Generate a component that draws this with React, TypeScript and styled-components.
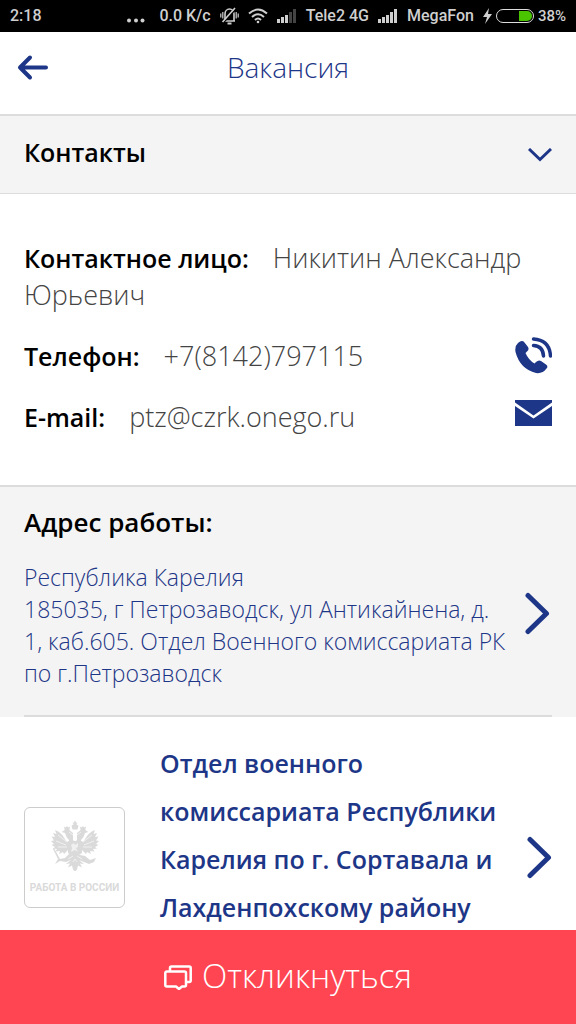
import React from 'react';
import styled, { createGlobalStyle } from 'styled-components';

const NAVY = '#1d3687';
const LINE = '#dcdcdc';
const PANEL = '#f4f4f4';
const UI_FONT = '"Open Sans", "Noto Sans", sans-serif';

const GlobalStyle = createGlobalStyle`
  *, *::before, *::after { box-sizing: border-box; }
  body { margin: 0; background: #fff; font-family: ${UI_FONT}; }
  h1, h2, h3, p, dl, dt, dd { margin: 0; }
  button { font: inherit; border: 0; padding: 0; background: none; cursor: pointer; }
  a { color: inherit; text-decoration: none; }
  svg { display: block; flex: none; }
`;

const Screen = styled.div`
  display: flex;
  flex-direction: column;
  height: 100vh;
  overflow: hidden;
`;

const StatusBar = styled.div`
  flex: none;
  display: flex;
  align-items: center;
  height: 32px;
  padding: 0 10px;
  background: #000;
  color: #cfcfcf;
  font: 500 16px/32px Roboto, sans-serif;
  white-space: nowrap;
`;

const StatusItems = styled.div`
  display: flex;
  align-items: center;
  gap: 9px;
  margin-left: auto;
`;

const Battery = styled.span`
  display: flex;
  align-items: center;
  gap: 4px;
`;

const BatteryLevel = styled.span`
  font-size: 15px;
`;

const Header = styled.header`
  flex: none;
  display: grid;
  grid-template-columns: 48px 1fr 48px;
  align-items: center;
  height: 84px;
  padding: 0 16px 12px;
  border-bottom: 2px solid ${LINE};
`;

const Title = styled.h1`
  color: ${NAVY};
  font-size: 28px;
  font-weight: 300;
  line-height: 40px;
  text-align: center;
`;

const Content = styled.main`
  flex: 1;
  min-height: 0;
  overflow-y: auto;
  scrollbar-width: none;
`;

const SectionToggle = styled.button`
  display: flex;
  align-items: center;
  justify-content: space-between;
  width: 100%;
  height: 78px;
  padding: 0 24px;
  background: ${PANEL};
  border-bottom: 1px solid ${LINE};
  color: #000;
  font-size: 25px;
  font-weight: 600;
  line-height: 36px;
`;

const ToggleText = styled.span`
  padding-bottom: 5px;
`;

const ContactList = styled.dl`
  display: flex;
  flex-direction: column;
  gap: 24px;
  padding: 45px 24px 50px;
  border-bottom: 2px solid ${LINE};
`;

const ContactRow = styled.div`
  display: flex;
  align-items: center;
  justify-content: space-between;
  font-size: 27px;
  line-height: 37px;
`;

const Label = styled.dt`
  display: inline;
  margin-right: 24px;
  color: #000;
  font-size: 25px;
  font-weight: 600;
  line-height: 24px;
`;

const Value = styled.dd`
  display: inline;
  color: #444;
  font-weight: 300;
`;

const MailLink = styled.a`
  padding-bottom: 8px;
`;

const Address = styled.section`
  padding: 16px 24px 0;
  background: ${PANEL};
`;

const AddressTitle = styled.h2`
  color: #000;
  font-size: 26px;
  font-weight: 600;
  line-height: 38px;
`;

const AddressLink = styled.a`
  display: flex;
  align-items: center;
  justify-content: space-between;
  padding: 20px 2px 26px 0;
  border-bottom: 2px solid ${LINE};
  color: ${NAVY};
  font-size: 23px;
  font-weight: 300;
  line-height: 32px;
  white-space: nowrap;
`;

const RaisedIcon = styled.span`
  padding-bottom: 24px;
`;

const Employer = styled.a`
  display: grid;
  grid-template-columns: 136px 1fr 25px;
  align-items: center;
  padding: 22px 24px 0;
  color: ${NAVY};
`;

const EmployerName = styled.h3`
  padding-bottom: 44px;
  font-size: 25px;
  font-weight: 600;
  line-height: 48px;
  white-space: nowrap;
`;

const Logo = styled.span`
  display: flex;
  flex-direction: column;
  align-items: center;
  gap: 7px;
  width: 101px;
  height: 101px;
  padding-top: 13px;
  border: 1px solid #ccc;
  border-radius: 6px;
  color: #dadada;
`;

const LogoText = styled.span`
  font: 700 10px/20px Roboto, sans-serif;
  white-space: nowrap;
`;

const ReplyButton = styled.button`
  && {
    flex: none;
    display: flex;
    align-items: center;
    justify-content: center;
    gap: 10px;
    height: 94px;
    padding-bottom: 3px;
    background: #ff4552;
    color: #fff;
    font-size: 33px;
    font-weight: 300;
    line-height: 44px;
  }
`;

const Signal = ({ level }: { level: number }) => (
  <svg width="20" height="16" viewBox="0 0 20 16">
    {[4, 6, 8, 11, 14].map((h, i) => (
      <rect key={h} x={i * 4} y={15 - h} width="3" height={h} fill={i < level ? '#cfcfcf' : '#444'} />
    ))}
  </svg>
);

const MutedBell = () => (
  <svg width="19" height="18" viewBox="0 0 19 18" fill="none" stroke="#cfcfcf" strokeWidth="1.6">
    <path d="M4 14h11M5 13.500V7a4.500 5 0 0 1 9 0v6.500" />
    <path d="M.8 6.500v4M18.200 6.500v4M2.800 5v6.500M16.200 5v6.500" strokeWidth="1.200" />
    <path d="M7.500 16.500h4" strokeWidth="2" />
    <path d="M3.500 15.500L16 2" stroke="#000" strokeWidth="1.500" />
    <path d="M2.500 15L15 1" />
  </svg>
);

const Wifi = () => (
  <svg width="20" height="16" viewBox="0 0 20 16" fill="none" stroke="#cfcfcf" strokeWidth="2">
    <path d="M1 5.500q9-8 18 0M4 9q6-5.500 12 0M7 12q3-3 6 0" />
    <circle cx="10" cy="14" r="1.300" fill="#cfcfcf" stroke="none" />
  </svg>
);

const ChevronRight = () => (
  <svg width="25" height="43" viewBox="0 0 25 43" fill="none" stroke={NAVY} strokeWidth="5" strokeLinecap="round" strokeLinejoin="round">
    <path d="M3 3.500L21.500 21.500L3 39.500" />
  </svg>
);

const Eagle = () => (
  <svg width="48" height="50" viewBox="0 0 48 50" fill="currentColor">
    <path d="M23.300 0h1.400v1.500h1.500v1.300h-1.500l2.800 2-1 3.700h-5l-1-3.700 2.800-2h-1.500V1.500h1.500z" />
    <path d="M16 5l1.200 1.500L19 5.500l-.6 3.500 3.600 3v7l2 2 2-2v-7l3.600-3-.6-3.500 1.800 1L32 5l1.200 1.500 1.800-1-.7 3.500 3 2-3.300 1-1.500 4-2.500 3v4H18v-4l-2.500-3-1.500-4-3.300-1 3-2L13 5.500l1.800 1z" />
    <path d="M17 21C13 20 14 13 4 9l1.500 4L2 12l2 4-3.500-.5 2.500 4L0 20l3 3-2.500 1 3.500 2-2 1.500 4 .5-1.500 2.500L9 30l-1 3 4-2 1 2 4-4z" />
    <path d="M31 21c4-1 3-8 13-12l-1.500 4 3.500-1-2 4 3.500-.5-2.500 4 3 .5-3 3 2.500 1-3.500 2 2 1.500-4 .5 1.500 2.500-4.500-.5 1 3-4-2-1 2-4-4z" />
    <path d="M17 20h14v12l-3 2h-2l-2 2-2-2h-2l-3-2z" />
    <path d="M20 24l3-2 1 2 3-2v4l-2 1 2 4-3-2-4 2 1-4z" fill="#fff" opacity=".6" />
    <path d="M18 33l-4 4-5 1-6-11-1.200.6L7 38l-3 5 5-3 6 1 5-2-5 4 4-.5-2 4 4-2 1 4 2 2 2-2 1-4 4 2-2-4 4 .5-5-4 5 2 5 2 5-2 2-4-6 2-5-4-5-1z" />
    <path d="M7 14l9 7M5 20l10 4M7 26l9 0M41 14l-9 7M43 20l-10 4M41 26l-9 0M18 11l4 3M30 11l-4 3M17 38l5-3M31 38l-5-3M22 41l2-3 2 3" stroke="#fff" fill="none" opacity=".6" />
  </svg>
);

export default function App() {
  return (
    <>
      <GlobalStyle />
      <Screen>
        <StatusBar>
          <span>2:18</span>
          <StatusItems>
            <svg width="23" height="14" viewBox="0 0 23 14" fill="#cfcfcf">
              <circle cx="2" cy="11.500" r="2" /><circle cx="9" cy="11.500" r="2" /><circle cx="15.500" cy="11.500" r="2" />
            </svg>
            <span>0.0 K/c</span>
            <MutedBell />
            <Wifi />
            <Signal level={3} />
            <span>Tele2 4G</span>
            <Signal level={5} />
            <span>MegaFon</span>
            <Battery>
              <svg width="9" height="16" viewBox="0 0 9 16" fill="#cfcfcf"><path d="M6 0L0 9h4L2 16l7-10H5z" /></svg>
              <svg width="38" height="14" viewBox="0 0 38 14">
                <path d="M23 2h8a5 5 0 0 1 0 10h-8z" fill="#4ac400" />
                <rect x=".5" y=".5" width="37" height="13" rx="6.500" fill="none" stroke="#ddd" />
              </svg>
              <BatteryLevel>38%</BatteryLevel>
            </Battery>
          </StatusItems>
        </StatusBar>

        <Header>
          <button type="button" aria-label="Назад">
            <svg width="32" height="28" viewBox="0 0 32 28" fill="none" stroke={NAVY} strokeWidth="4" strokeLinecap="round" strokeLinejoin="round">
              <path d="M14 4.500L4 14.500l10 10M4 14.500h26" />
            </svg>
          </button>
          <Title>Вакансия</Title>
        </Header>

        <Content>
          <SectionToggle type="button" aria-expanded="true">
            <ToggleText>Контакты</ToggleText>
            <svg width="24" height="14" viewBox="0 0 24 14" fill="none" stroke={NAVY} strokeWidth="3">
              <path d="M1 1l11 10.500L23 1" />
            </svg>
          </SectionToggle>

          <ContactList>
            <ContactRow>
              <div><Label>Контактное лицо:</Label><Value>Никитин Александр Юрьевич</Value></div>
            </ContactRow>
            <ContactRow>
              <div><Label>Телефон:</Label><Value>+7(8142)797115</Value></div>
              <a href="tel:+78142797115" aria-label="Позвонить">
                <svg width="37" height="37" viewBox="0 0 37 37" fill={NAVY}>
                  <path d="M3 6Q7 2.500 9.500 5.500l3.500 4.500q1.500 2.500-1 4.500l-1.500 1.500q3 7 9 10.500l1.500-1.500q2.500-2.500 5-1l5 3.500q2.500 2 .5 4-4 5.500-10.500 4.500Q5 32 .5 15-.5 9 3 6z" />
                  <path d="M18.500 2q16 1 17 17M18.500 8.500q9.500 .5 10 10.500" fill="none" stroke={NAVY} strokeWidth="3.500" strokeLinecap="round" />
                </svg>
              </a>
            </ContactRow>
            <ContactRow>
              <div><Label>E-mail:</Label><Value>ptz@czrk.onego.ru</Value></div>
              <MailLink href="mailto:ptz@czrk.onego.ru" aria-label="Написать">
                <svg width="37" height="26" viewBox="0 0 37 26" fill={NAVY}>
                  <path d="M0 0h37v2.500L18.500 15.500 0 2.500zM0 6l18.500 12.500L37 6v20H0z" />
                </svg>
              </MailLink>
            </ContactRow>
          </ContactList>

          <Address>
            <AddressTitle>Адрес работы:</AddressTitle>
            <AddressLink href="#map">
              <p>
                Республика Карелия<br />
                185035, г Петрозаводск, ул Антикайнена, д.<br />
                1, каб.605. Отдел Военного комиссариата РК<br />
                по г.Петрозаводск
              </p>
              <RaisedIcon><ChevronRight /></RaisedIcon>
            </AddressLink>
          </Address>

          <Employer href="#employer">
            <Logo>
              <Eagle />
              <LogoText>РАБОТА В РОССИИ</LogoText>
            </Logo>
            <EmployerName>
              Отдел военного<br />
              комиссариата Республики<br />
              Карелия по г. Сортавала и<br />
              Лахденпохскому району
            </EmployerName>
            <ChevronRight />
          </Employer>
        </Content>

        <ReplyButton type="button">
          <svg width="28" height="28" viewBox="0 0 28 28" fill="none" stroke="#fff" strokeWidth="2.500" strokeLinejoin="round">
            <path d="M2.800 9.500h17.700a1.500 1.500 0 0 1 1.500 1.500v12a1.500 1.500 0 0 1-1.500 1.500H18L15 27l-3-2.500H2.800A1.500 1.500 0 0 1 1.300 23V11A1.500 1.500 0 0 1 2.800 9.500z" />
            <path d="M6 9V6a1.500 1.500 0 0 1 1.500-1.500h17.700A1.500 1.500 0 0 1 26.700 6v12.500a1.500 1.500 0 0 1-1.500 1.500H22" />
          </svg>
          Откликнуться
        </ReplyButton>
      </Screen>
    </>
  );
}
